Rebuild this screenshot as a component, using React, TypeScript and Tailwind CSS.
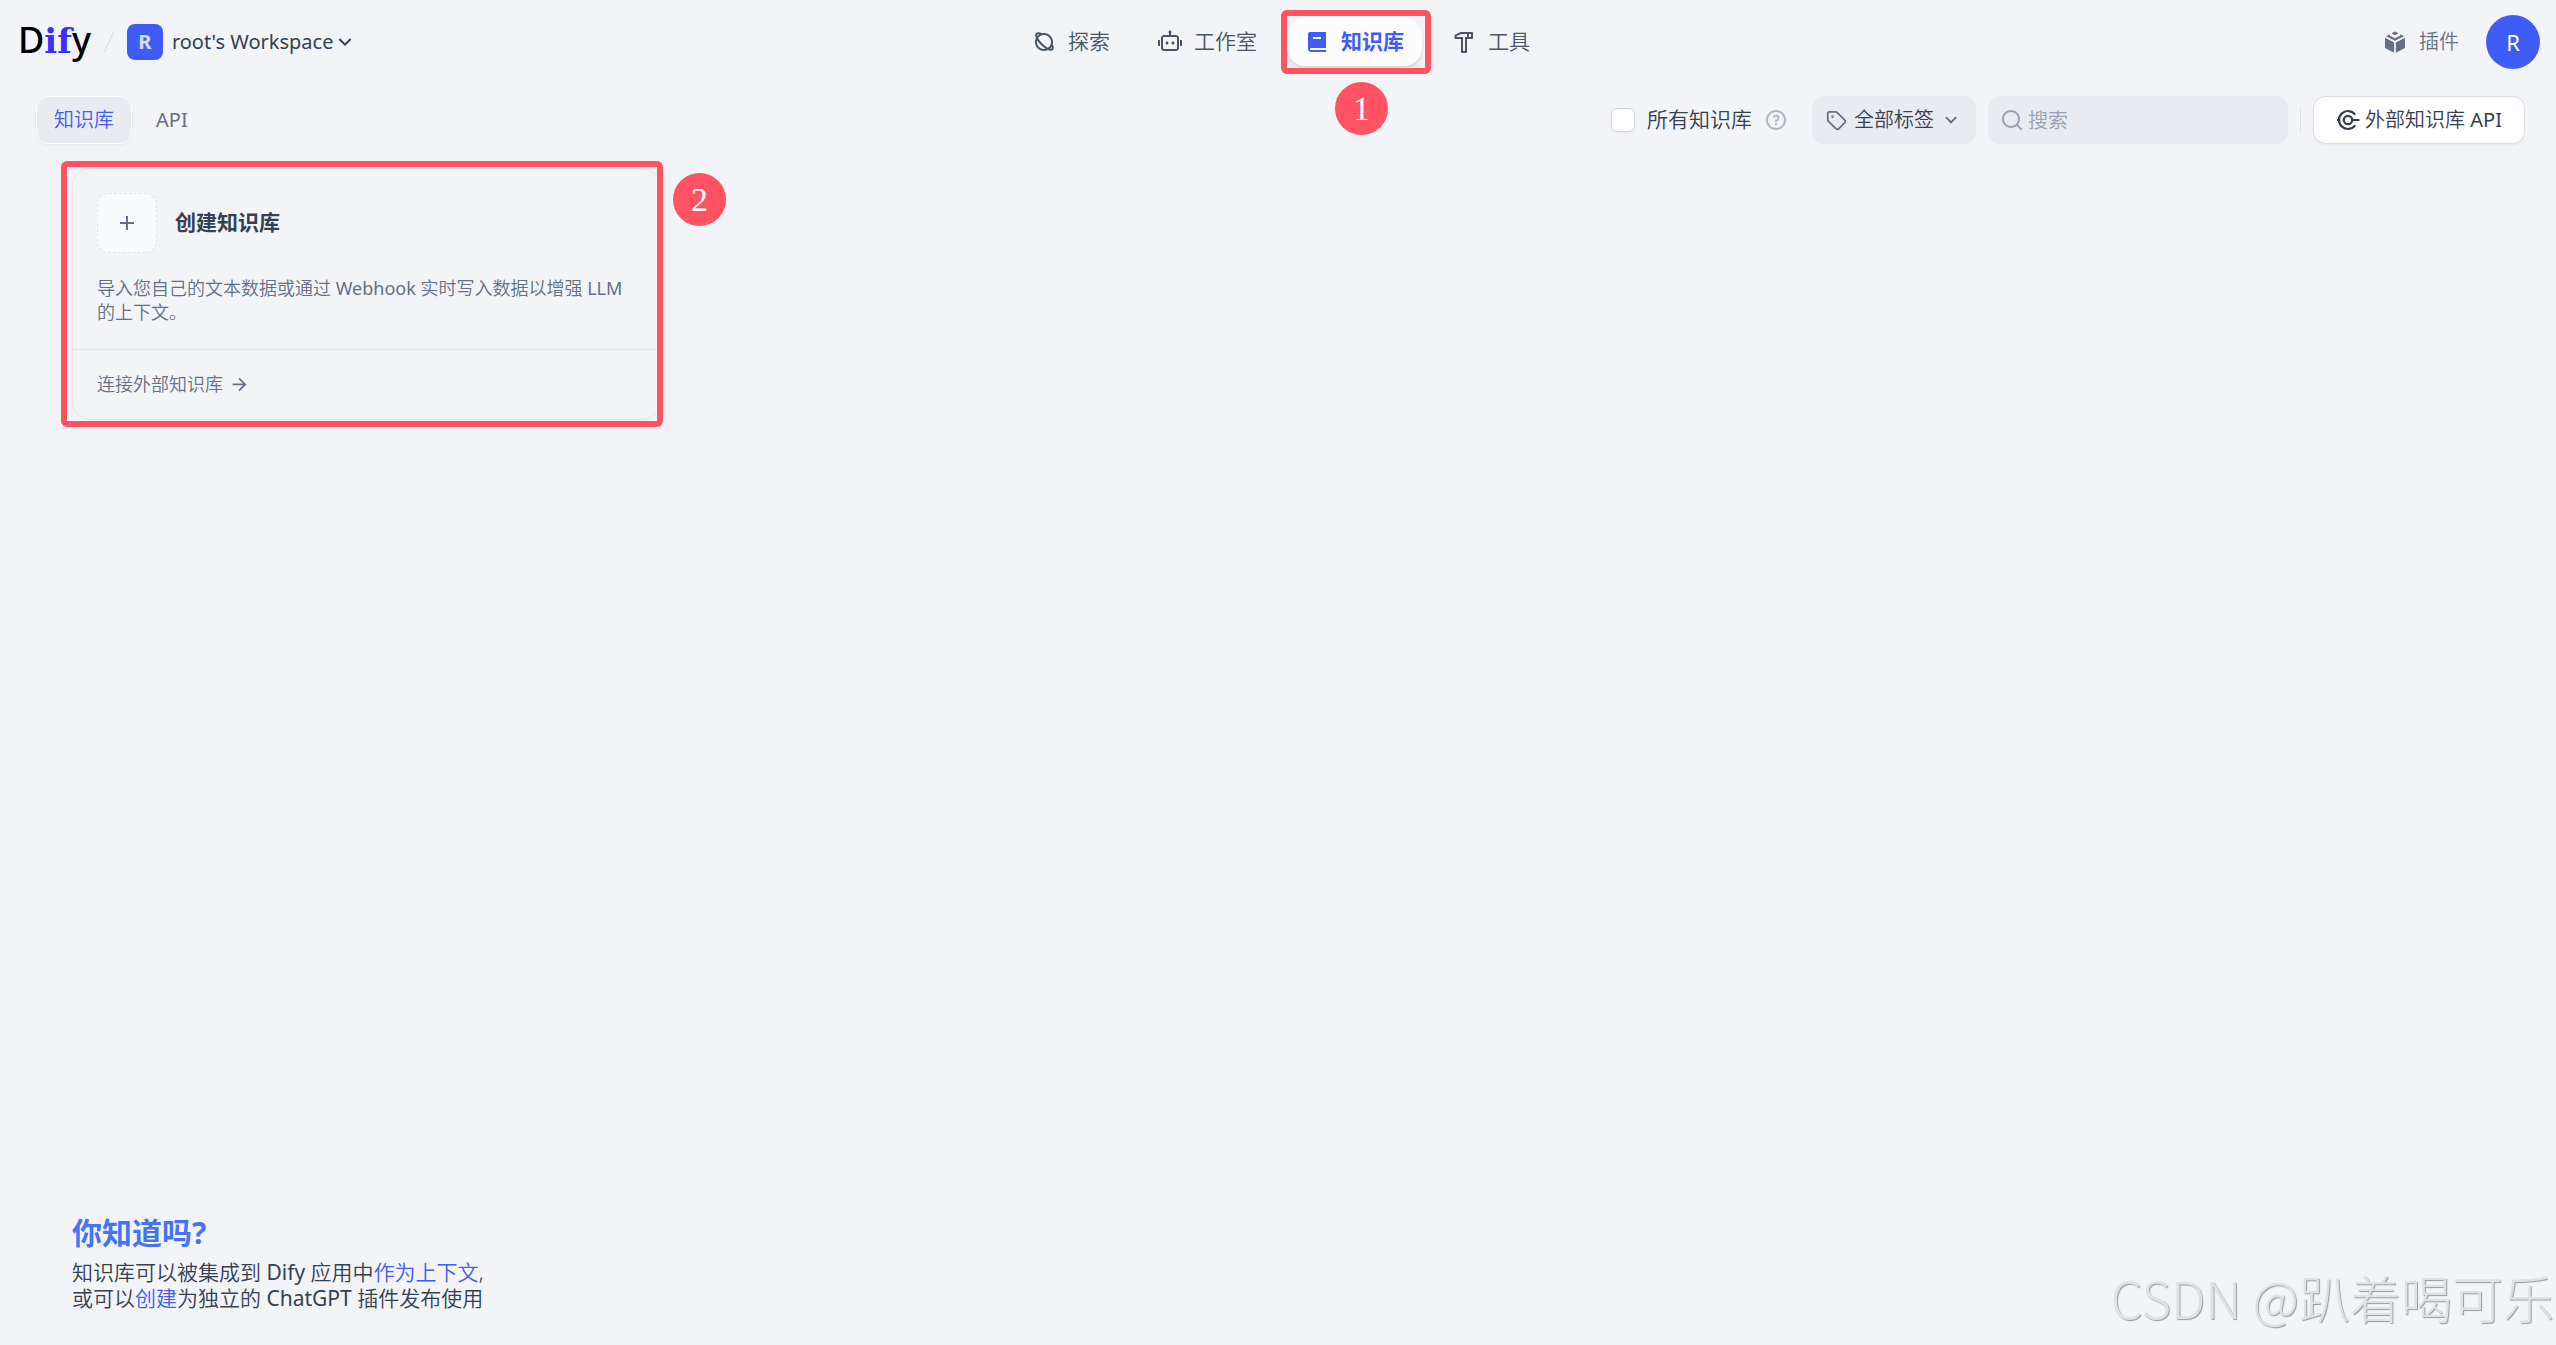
import React, { useState } from "react";
import { Tag } from "lucide-react";
import {
  RiAddLine,
  RiArrowDownSLine,
  RiArrowRightLine,
  RiBook2Fill,
  RiHammerLine,
  RiPlanetLine,
  RiQuestionLine,
  RiRobot2Line,
  RiSearchLine,
} from "react-icons/ri";

type NavItem = {
  id: string;
  label: string;
  icon: React.ComponentType<{ className?: string }>;
};

const navItems: NavItem[] = [
  { id: "explore", label: "探索", icon: RiPlanetLine },
  { id: "studio", label: "工作室", icon: RiRobot2Line },
  { id: "datasets", label: "知识库", icon: RiBook2Fill },
  { id: "tools", label: "工具", icon: RiHammerLine },
];

function PluginIcon() {
  return (
    <svg viewBox="0 0 24 24" className="size-6" fill="currentColor" aria-hidden="true">
      <path d="M9 2.9 12 1.4l3 1.5v.9l-3 1.5-3-1.5z" />
      <path d="M6.6 4.3 3 6.2l9 4.6 9-4.6-3.6-1.9-.4 1.4-5 2.5-5-2.5z" />
      <path d="M2 7.8 11.1 12.4v10.4L2 18z" />
      <path d="M22 7.8 12.9 12.4v10.4L22 18z" />
    </svg>
  );
}

function ApiIcon() {
  return (
    <svg viewBox="0 0 24 24" className="size-6" fill="none" stroke="currentColor" strokeWidth="2.2" aria-hidden="true">
      <path d="M19.2 6.6A9 9 0 1 0 19.2 17.4" />
      <circle cx="12" cy="12" r="4.2" />
      <path d="M16.2 12H23.5M1 12h2.5" />
    </svg>
  );
}

function Step({ n, className }: { n: number; className: string }) {
  return (
    <span
      className={`absolute flex size-[53px] items-center justify-center rounded-full bg-[#ff5263] font-['Liberation_Serif',serif] text-[34px] leading-none font-normal text-white ${className}`}
    >
      {n}
    </span>
  );
}

function Header() {
  const [active, setActive] = useState("datasets");

  return (
    <header className="grid h-[84px] grid-cols-[1fr_auto_1fr] items-center pr-4 pl-[22px]">
      <div className="flex items-center">
        <a href="#home" className="-ml-1 flex items-baseline pb-1 text-[36px] leading-none font-medium text-black">
          <span>D</span>
          <span className="font-['DejaVu_Serif',serif] text-[34px] font-bold text-[#3a2fff]">if</span>
          <span>y</span>
        </a>
        <svg viewBox="0 0 12 22" className="ml-3 h-[22px] w-3" stroke="#d5d8df" aria-hidden="true">
          <path d="M1.5 21 10.5 1" />
        </svg>
        <button type="button" className="ml-3 flex items-center text-[20px] font-normal text-[#354052]">
          <span className="mr-[9px] flex size-9 items-center justify-center rounded-lg bg-[#3f5cf5] font-bold text-white/80">R</span>
          root's Workspace
          <RiArrowDownSLine className="size-6" />
        </button>
      </div>

      <nav className="flex gap-3">
        {navItems.map(({ id, label, icon: Icon }) => (
          <div key={id} className="relative">
            <button
              type="button"
              onClick={() => setActive(id)}
              className={
                active === id
                  ? "flex h-12 items-center gap-3 rounded-[18px] bg-[#fcfcfd] px-[18px] text-[21px] font-bold text-[#3f5cf5] shadow-md"
                  : "flex h-12 items-center gap-3 rounded-[18px] px-[18px] text-[21px] text-[#495464]"
              }
            >
              <Icon className="size-6" />
              {label}
            </button>
            {id === "datasets" && (
              <>
                <span className="pointer-events-none absolute -top-2 -right-[9px] -bottom-2 -left-[6px] rounded-md border-6 border-[#ff5263]" />
                <Step n={1} className="top-16 left-12" />
              </>
            )}
          </div>
        ))}
      </nav>

      <div className="flex items-center justify-end">
        <a href="#plugins" className="flex items-center gap-3 text-[20px] text-[#676f83]">
          <PluginIcon />
          插件
        </a>
        <button type="button" className="ml-[27px] size-[54px] rounded-full bg-[#3f5cf5] text-[22px] font-normal text-white">
          R
        </button>
      </div>
    </header>
  );
}

function Toolbar() {
  return (
    <div className="flex h-[72px] items-center justify-between pr-[31px] pl-9">
      <div className="flex items-center text-[20px]">
        <button type="button" className="h-12 rounded-xl border border-white bg-[#eaebf0] px-[17px] text-[#3f5cf5] shadow-xs">
          知识库
        </button>
        <button type="button" className="h-12 px-6 font-normal text-[#676f83]">
          API
        </button>
      </div>

      <div className="flex items-center text-[20px] text-[#354052]">
        <label className="flex items-center gap-3 text-[21px]">
          <input
            type="checkbox"
            className="size-6 appearance-none rounded-md border border-[#d0d5dc] bg-white shadow-xs checked:bg-[#3f5cf5]"
          />
          所有知识库
        </label>
        <RiQuestionLine className="ml-3 size-6 text-[#b4b7bf]" />

        <div className="relative ml-6 flex items-center">
          <Tag className="pointer-events-none absolute left-[14px] size-[21px] text-[#676f83]" />
          <select
            aria-label="标签"
            className="h-12 w-[164px] appearance-none rounded-xl bg-[#e8ebf0] pl-[42px]"
          >
            <option>全部标签</option>
          </select>
          <RiArrowDownSLine className="pointer-events-none absolute right-[14px] size-[22px] text-[#676f83]" />
        </div>

        <div className="relative ml-3 flex items-center">
          <RiSearchLine className="pointer-events-none absolute left-3 size-6 text-[#98a2b2]" />
          <input
            type="text"
            aria-label="搜索"
            placeholder="搜索"
            className="h-12 w-[300px] rounded-xl bg-[#e8ebf0] pr-3 pl-10 placeholder:text-[#98a2b2]"
          />
        </div>

        <div className="mx-3 h-6 w-px bg-[#dcdfe5]" />

        <button
          type="button"
          className="flex h-12 w-[212px] items-center justify-center gap-[5px] rounded-xl border border-[#dcdee4] bg-white shadow-xs"
        >
          <ApiIcon />
          <span>外部知识库 <span className="font-normal">API</span></span>
        </button>
      </div>
    </div>
  );
}

function CreateCard() {
  return (
    <section className="relative mt-3 ml-[72px] w-[588px] rounded-[18px] border border-[#e4e6eb] text-[18px] text-[#676f83]">
      <a href="#create" className="block px-6 pt-6">
        <div className="flex items-center gap-[18px]">
          <span className="flex size-[60px] items-center justify-center rounded-xl border border-dashed border-[#e2e4ea] bg-[#f9fafb]">
            <RiAddLine className="size-6" />
          </span>
          <h2 className="text-[21px] font-bold text-[#354052]">创建知识库</h2>
        </div>
        <p className="mt-[23px] h-[73px] leading-6">
          导入您自己的文本数据或通过 <span className="font-normal">Webhook</span> 实时写入数据以增强{" "}
          <span className="font-normal">LLM</span> 的上下文。
        </p>
      </a>
      <a href="#connect" className="flex h-[70px] items-center gap-[6px] border-t border-[#e4e6eb] px-6">
        连接外部知识库
        <RiArrowRightLine className="size-[21px]" />
      </a>
      <span className="pointer-events-none absolute -top-2 -right-1 -bottom-2 -left-3 rounded-md border-6 border-[#ff5263]" />
      <Step n={2} className="top-1 -right-[67px]" />
    </section>
  );
}

export default function App() {
  return (
    <div className="relative flex min-h-screen flex-col bg-[#f2f4f8] font-['Noto_Sans','Noto_Sans_CJK_SC',sans-serif] font-[350]">
      <Header />
      <Toolbar />
      <main className="flex-1">
        <CreateCard />
      </main>
      <footer className="px-[72px] pb-[34px] text-[21px] leading-[26px] text-[#354052]">
        <h3 className="mb-2 text-[30px] leading-9 font-bold text-[#4573f7]">你知道吗?</h3>
        <p>
          知识库可以被集成到 <span className="font-normal">Dify</span> 应用中
          <a href="#context" className="text-[#3f5cf5]">作为上下文</a>,
          <br />
          或可以<a href="#create" className="text-[#3f5cf5]">创建</a>为独立的{" "}
          <span className="font-normal">ChatGPT</span> 插件发布使用
        </p>
      </footer>
      <div className="pointer-events-none absolute right-[2px] bottom-3 font-['Noto_Sans_CJK_SC',sans-serif] text-[51px] leading-[72px] font-light text-[#dfe1e3] [text-shadow:1px_1px_1px_#9a9c9f]">
        CSDN @趴着喝可乐
      </div>
    </div>
  );
}
